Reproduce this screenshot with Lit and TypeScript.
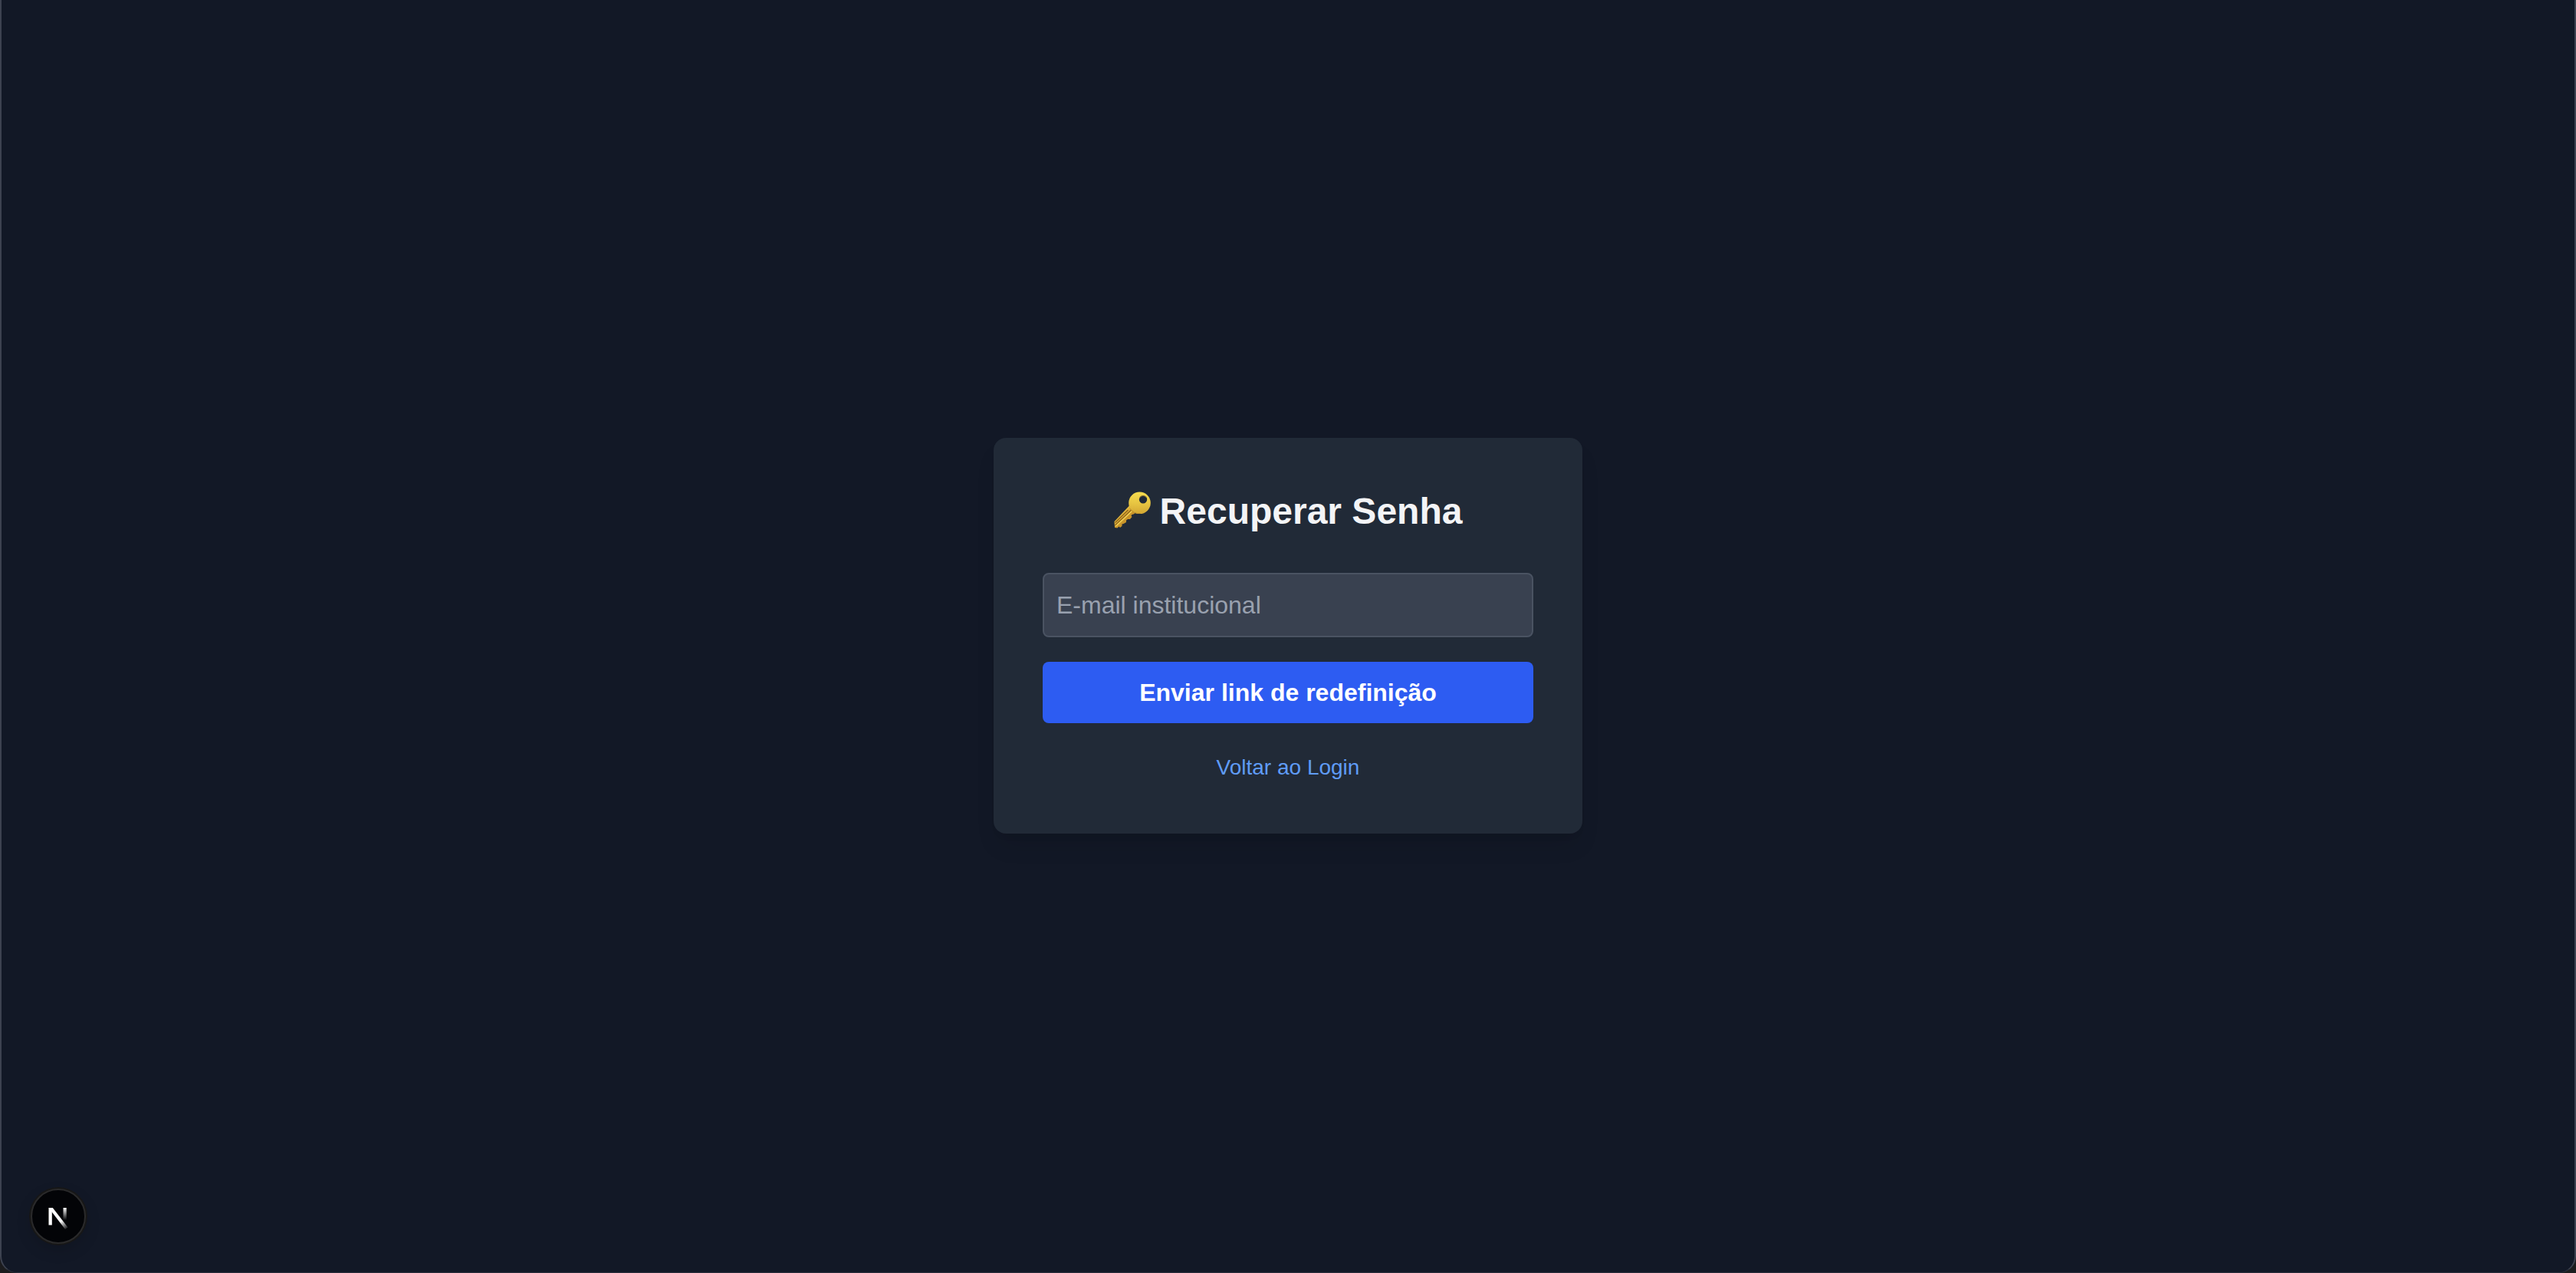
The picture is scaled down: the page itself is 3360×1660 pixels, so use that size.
import { LitElement, html, css } from "lit";
import { customElement } from "lit/decorators.js";

@customElement("app-root")
export class AppRoot extends LitElement {
  static styles = css`
    :host {
      display: block;
      background: #1c1c1e;
      font-family: "Liberation Sans", Arial, Helvetica, sans-serif;
      font-size: 32px;
      line-height: 48px;
    }
    *, *::before, *::after { box-sizing: border-box; }
    .page {
      min-height: 100vh;
      display: flex;
      align-items: center;
      justify-content: center;
      padding-bottom: 1px;
      background: #121826;
      border: 2px solid #3d4250;
      border-top: 0;
      border-bottom: 1px solid #2a2f3d;
      border-radius: 0 0 22px 22px;
    }
    .card {
      width: 100%;
      max-width: 768px;
      padding: 64px;
      border-radius: 16px;
      background: #212a37;
      box-shadow: 0 20px 30px -6px rgba(0, 0, 0, 0.1), 0 8px 12px -8px rgba(0, 0, 0, 0.1);
    }
    .title {
      display: flex;
      align-items: center;
      justify-content: center;
      gap: 12px;
      margin: 0 0 48px;
      color: #f3f4f6;
      font-size: 48px;
      line-height: 64px;
      font-weight: 700;
    }
    .key { width: 48px; height: 48px; flex: none; margin-bottom: 4px; }
    .form { display: flex; flex-direction: column; gap: 32px; }
    .field { display: flex; }
    .input {
      width: 100%;
      height: 84px;
      padding: 16px;
      border: 2px solid #4a5362;
      border-radius: 8px;
      background: #394150;
      color: #f3f4f6;
      font: inherit;
      outline: none;
    }
    .input::placeholder { color: #99a1af; opacity: 1; }
    .submit {
      padding: 16px;
      border: 0;
      border-radius: 8px;
      background: #2d5cf2;
      color: #ffffff;
      font: inherit;
      font-weight: 700;
      cursor: pointer;
    }
    .back { margin: 32px 0 0; text-align: center; }
    .link { color: #5f9cf8; font-size: 28px; line-height: 40px; text-decoration: none; }
    .link:hover { text-decoration: underline; }
    .devtools {
      position: fixed;
      left: 40px;
      bottom: 38px;
      width: 72px;
      height: 72px;
      padding: 0;
      border: 2px solid #2a2a2b;
      border-radius: 50%;
      background: #030407;
      box-shadow: 0 0 0 2px #171717, 0 8px 20px rgba(0, 0, 0, 0.15);
      cursor: pointer;
    }
    .logo { display: block; width: 68px; height: 68px; }
  `;

  private key() {
    return html`<svg class="key" viewBox="1.500 1 48 48" aria-hidden="true">
      <defs>
        <linearGradient id="bow" x1="0" y1="0" x2="0" y2="1">
          <stop offset="0" stop-color="#f6dc4e" />
          <stop offset="0.55" stop-color="#e6c341" />
          <stop offset="1" stop-color="#d3a733" />
        </linearGradient>
        <linearGradient id="blade" gradientUnits="userSpaceOnUse" x1="8" y1="30" x2="16" y2="38">
          <stop offset="0" stop-color="#edc745" />
          <stop offset="0.4" stop-color="#dfb23a" />
          <stop offset="1" stop-color="#c8942a" />
        </linearGradient>
      </defs>
      <path fill="url(#blade)" d="M21 20 L23 18 L31 28 L27 30.500 L25 31 L24 32.500 L25 34 L22.500 37 L19.500 37 L17.500 38.500 L17.500 41 L14 43 L12 43.500 L12 46 L9.500 48 L8 46.500 L6 48.500 L2.500 48 L2 40 Z" />
      <path fill="none" stroke="#8f641b" stroke-width="1.300" d="M3 45 L24 25 M3 41.500 L20 25" />
      <path fill="none" stroke="#f6d95a" stroke-width="1.100" d="M4 46 L25 26.500" />
      <path fill="url(#bow)" fill-rule="evenodd" d="M35 1.500 a14.300 14.300 0 1 1 0 28.600 a14.300 14.300 0 1 1 0 -28.600 Z M39.500 6 a5.200 5.200 0 1 0 0 10.400 a5.200 5.200 0 1 0 0 -10.400 Z" />
      <path fill="none" stroke="#b98b29" stroke-width="0.800" d="M22 22.500 A13.800 13.800 0 0 0 36 29.500" />
      <path fill="none" stroke="#b38a2b" stroke-width="0.700" d="M34.500 10 A5.200 5.200 0 0 1 43.500 8.500" />
    </svg>`;
  }

  private logo() {
    return html`<svg class="logo" viewBox="0 0 68 68" aria-hidden="true">
      <defs>
        <linearGradient id="diag" gradientUnits="userSpaceOnUse" x1="38" y1="40" x2="46" y2="51">
          <stop offset="0" stop-color="#fff" />
          <stop offset="1" stop-color="#fff" stop-opacity="0" />
        </linearGradient>
        <linearGradient id="stem" x1="0" y1="0" x2="0" y2="1">
          <stop offset="0" stop-color="#fff" />
          <stop offset="1" stop-color="#fff" stop-opacity="0" />
        </linearGradient>
      </defs>
      <path fill="#fff" d="M21.500 23 h4.300 v22.500 h-4.300 Z" />
      <path fill="url(#diag)" d="M21.500 23 h5.300 L46.500 48.500 L43 51 Z" />
      <rect fill="url(#stem)" x="40.500" y="23" width="4.200" height="16" />
    </svg>`;
  }

  render() {
    return html`
      <main class="page">
        <section class="card">
          <h1 class="title">${this.key()}<span>Recuperar Senha</span></h1>
          <form class="form" @submit=${(e: Event) => e.preventDefault()}>
            <label class="field">
              <input class="input" type="email" name="email" aria-label="E-mail institucional" placeholder="E-mail institucional" required />
            </label>
            <button class="submit" type="submit">Enviar link de redefinição</button>
          </form>
          <p class="back"><a class="link" href="/login">Voltar ao Login</a></p>
        </section>
      </main>
      <button class="devtools" type="button" aria-label="Next.js">${this.logo()}</button>
    `;
  }
}
